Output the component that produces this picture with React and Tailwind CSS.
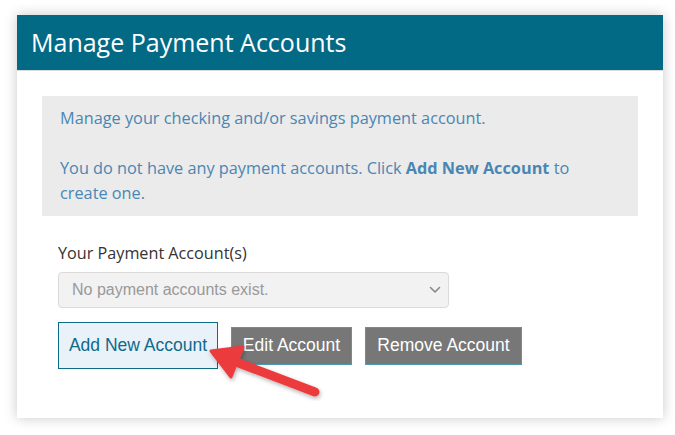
import React from "react";

export default function App() {
  return (
    <div className="relative w-[675px] h-[435px] bg-white overflow-hidden">
      <div className="absolute left-[17px] top-[15px] w-[646px] h-[403px] bg-white shadow-[0_0_12px_rgba(0,0,0,0.22)] flex flex-col">
        <div className="h-[55px] bg-[#036a86] border-b border-[#dcdcdc] flex items-center pl-[14px] box-content">
          <h1 className="text-white text-[25px] font-['Open_Sans',sans-serif] font-normal leading-none pb-[1px]">
            Manage Payment Accounts
          </h1>
        </div>
        <div className="px-[25px] pt-[25px] flex flex-col">
          <div className="bg-[#ebebeb] px-[18px] py-[10px] text-[#4a86b3] text-[16.3px] leading-[25px] font-['Open_Sans',sans-serif]">
            <p className="mb-[25px]">Manage your checking and/or savings payment account.</p>
            <p>
              You do not have any payment accounts. Click <b className="font-bold">Add New Account</b> to
              <br />
              create one.
            </p>
          </div>
          <div className="pl-[16px] pt-[27px] flex flex-col">
            <label className="text-[16.2px] leading-[20px] text-[#333] font-['Open_Sans',sans-serif]">
              Your Payment Account(s)
            </label>
            <div className="mt-[9px] w-[391px] h-[36px] bg-[#f2f2f2] border border-[#dadada] rounded-[4px] flex items-center justify-between pl-[13px] pr-[7px] font-['Liberation_Sans',Arial,sans-serif] text-[16px] text-[#999]">
              <span>No payment accounts exist.</span>
              <svg width="12" height="8" viewBox="0 0 12 8" fill="none">
                <path d="M1.5 1.5 L6 6 L10.5 1.5" stroke="#888" strokeWidth="1.6" strokeLinecap="round" strokeLinejoin="round" />
              </svg>
            </div>
            <div className="mt-[14px] flex items-center gap-[13px] font-['Liberation_Sans',Arial,sans-serif] text-[17.5px]">
              <button className="w-[160px] h-[47px] bg-[#e9f1f9] border border-[#0d6b88] text-[#0f6a8b] flex items-center justify-center">
                Add New Account
              </button>
              <button className="w-[121px] h-[38px] bg-[#777777] border border-[#4f9ab0] text-white flex items-center justify-center">
                Edit Account
              </button>
              <button className="w-[157px] h-[38px] bg-[#777777] border border-[#4f9ab0] text-white flex items-center justify-center">
                Remove Account
              </button>
            </div>
          </div>
        </div>
      </div>
      <svg className="absolute left-0 top-0 pointer-events-none" width="675" height="435" viewBox="0 0 675 435">
        <defs>
          <filter id="sh" x="-20%" y="-20%" width="140%" height="140%">
            <feDropShadow dx="1" dy="2" stdDeviation="2" floodColor="#000" floodOpacity="0.3" />
          </filter>
        </defs>
        <g filter="url(#sh)" fill="#ec3b3e" stroke="#ec3b3e">
          <line x1="315" y1="392" x2="236" y2="362" strokeWidth="9" strokeLinecap="round" />
          <polygon points="211,351 243,347 231,377" strokeWidth="3" strokeLinejoin="round" />
        </g>
      </svg>
    </div>
  );
}
